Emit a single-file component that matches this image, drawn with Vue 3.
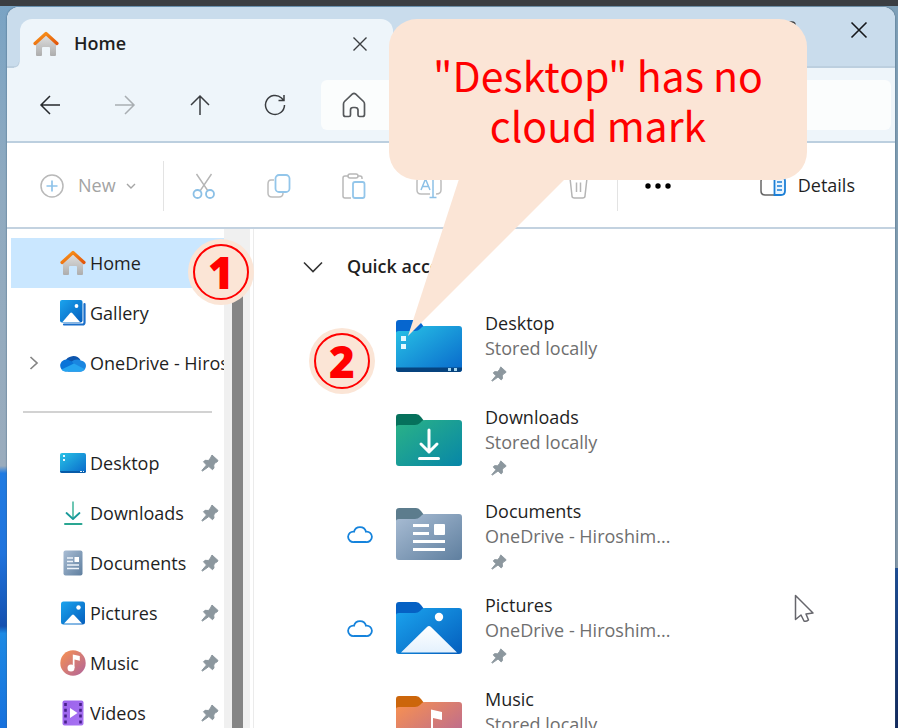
<script setup>
const commands = [
  { id: 'cut', label: 'Cut' },
  { id: 'copy', label: 'Copy' },
  { id: 'paste', label: 'Paste' },
  { id: 'rename', label: 'Rename' },
  { id: 'share', label: 'Share' },
  { id: 'trash', label: 'Delete' },
]

const places = [
  { id: 'home', name: 'Home', active: true },
  { id: 'gallery', name: 'Gallery' },
  { id: 'onedrive', name: 'OneDrive - Hiroshima', expandable: true },
]

const pinned = [
  { id: 'desktop', name: 'Desktop' },
  { id: 'downloads', name: 'Downloads' },
  { id: 'documents', name: 'Documents' },
  { id: 'pictures', name: 'Pictures' },
  { id: 'music', name: 'Music' },
  { id: 'videos', name: 'Videos' },
]

const folders = [
  { id: 'desktop', name: 'Desktop', place: 'Stored locally' },
  { id: 'downloads', name: 'Downloads', place: 'Stored locally' },
  { id: 'documents', name: 'Documents', place: 'OneDrive - Hiroshim...', cloud: true },
  { id: 'pictures', name: 'Pictures', place: 'OneDrive - Hiroshim...', cloud: true },
  { id: 'music', name: 'Music', place: 'Stored locally' },
]
</script>

<template>
  <div class="desk">
    <svg class="sprite" aria-hidden="true">
      <defs>
        <linearGradient id="g-roof" x1="0" y1="0" x2="1" y2="1"><stop offset="0" stop-color="#fb9a1c" /><stop offset="1" stop-color="#e2560b" /></linearGradient>
        <linearGradient id="g-wall" x1="0" y1="0" x2="0" y2="1"><stop offset="0" stop-color="#e2e2e2" /><stop offset="1" stop-color="#adadad" /></linearGradient>
        <linearGradient id="g-desktop" x1="0" y1="0" x2="1" y2="1"><stop offset="0" stop-color="#29c3e6" /><stop offset="1" stop-color="#0868cb" /></linearGradient>
        <linearGradient id="g-downloads" x1="0" y1="0" x2="1" y2="1"><stop offset="0" stop-color="#2bb386" /><stop offset="1" stop-color="#0786a8" /></linearGradient>
        <linearGradient id="g-documents" x1="0" y1="0" x2="1" y2="1"><stop offset="0" stop-color="#a9bdd4" /><stop offset="1" stop-color="#5f7f9f" /></linearGradient>
        <linearGradient id="g-pictures" x1="0" y1="0" x2="1" y2="1"><stop offset="0" stop-color="#1ba4ee" /><stop offset="1" stop-color="#045ebd" /></linearGradient>
        <linearGradient id="g-music" x1="0" y1="0" x2="1" y2="1"><stop offset="0" stop-color="#f9924f" /><stop offset="1" stop-color="#b0649c" /></linearGradient>
        <linearGradient id="g-videos" x1="0" y1="0" x2="1" y2="1"><stop offset="0" stop-color="#9a62ea" /><stop offset="1" stop-color="#a873f3" /></linearGradient>
        <linearGradient id="g-snow" x1="0" y1="0" x2="0" y2="1"><stop offset="0" stop-color="#ffffff" /><stop offset="1" stop-color="#e4f1fd" /></linearGradient>
      </defs>

      <symbol id="s-home" viewBox="0 0 26 26">
        <path d="M3 12 13 3l10 9v12q0 1-1 1h-4q-1 0-1-1v-7q0-1-1-1h-6q-1 0-1 1v7q0 1-1 1H4q-1 0-1-1z" fill="url(#g-wall)" />
        <path d="M2 12.500 13 2.500l11 10" fill="none" stroke="url(#g-roof)" stroke-width="3.200" stroke-linecap="round" stroke-linejoin="round" />
      </symbol>
      <symbol id="s-gallery" viewBox="0 0 26 26">
        <path d="M24.500 4v18.500q0 2-2 2H4" fill="none" stroke="#1a6fca" stroke-width="2.200" stroke-linecap="round" />
        <rect x="0" y="0" width="22.500" height="22.500" rx="2" fill="url(#g-pictures)" />
        <path d="m2.500 22 7.700-9q1-1 2 0l7.800 9z" fill="#fff" />
        <circle cx="16.500" cy="6" r="1.900" fill="#fff" />
      </symbol>
      <symbol id="s-onedrive" viewBox="0 0 26 26">
        <path d="M5 12a8.500 8 0 0 1 15.500-2l-7 9z" fill="#0d55ad" />
        <path d="M11 12q5-4 10-1.500 5 1 5 5.500-.500 5.500-6 5.500H8z" fill="#1a86e0" />
        <path d="M5.500 21.500a6 6 0 1 1 3-11.500q3.500 1 5.500 4l9 6q-1 1.500-3 1.500z" fill="#0a74d8" />
        <path d="M1.500 19.500 14 13.500l10.500 5.500q-1.500 2.500-4.500 2.500H5.500q-3 0-4-2z" fill="#25a4f0" />
      </symbol>
      <symbol id="s-desktop" viewBox="0 0 26 26">
        <rect x="0" y="3" width="26" height="20" rx="2" fill="url(#g-desktop)" />
        <path d="M0 21h26q0 2-2 2H2q-2 0-2-2z" fill="#075ba8" />
        <path d="M3 5h2v2H3zM3 9h2v2H3zM20 21h2v1h-2zM23 21h1v1h-1z" fill="#e9f8ff" />
      </symbol>
      <symbol id="s-downloads" viewBox="0 0 26 26">
        <path d="M12.300 1.500h1.400V19h-1.400z" fill="#2fae92" />
        <path d="m6.500 13 6.500 6 6.500-6" fill="none" stroke="#199a9a" stroke-width="1.800" stroke-linecap="round" stroke-linejoin="round" />
        <path d="M5 24h16.500" stroke="#2aa692" stroke-width="2" stroke-linecap="round" />
      </symbol>
      <symbol id="s-documents" viewBox="0 0 26 26">
        <rect x="3.500" y="0.500" width="19" height="25" rx="2" fill="url(#g-documents)" />
        <path d="M7 8h6M7 11.500h6M7 15h12M7 18.500h12" stroke="#eef4fa" stroke-width="1.400" />
        <rect x="14.500" y="7" width="4.500" height="5" fill="#fff" />
      </symbol>
      <symbol id="s-pictures" viewBox="0 0 26 26">
        <rect x="1" y="1.500" width="24" height="23" rx="2.500" fill="url(#g-pictures)" />
        <path d="m4 23.500 8-8.500q1-1 2 0l8 8.500z" fill="#fff" />
        <circle cx="18.500" cy="7.500" r="2.200" fill="#fff" />
      </symbol>
      <symbol id="s-music" viewBox="0 0 26 26">
        <circle cx="13" cy="13" r="12.700" fill="url(#g-music)" />
        <circle cx="11" cy="18" r="3.500" fill="#fff" />
        <path d="M12.800 18V4.500l7 1.500v4.800l-5.300-1.300V18z" fill="#fff" />
      </symbol>
      <symbol id="s-videos" viewBox="0 0 26 26">
        <rect x="2.500" y="0.500" width="21" height="25" rx="2" fill="url(#g-videos)" />
        <path d="M5.500 3v21M20.500 3v21" stroke="#47208b" stroke-width="2.600" stroke-dasharray="3 2.800" />
        <path d="m10 8 7.500 5-7.500 5z" fill="#fff" />
      </symbol>

      <symbol id="f-desktop" viewBox="0 0 68 54">
        <path d="M1 4q0-3 3-3h17q3 0 5 3l3 4v8H1z" fill="#0666cf" />
        <path d="M1 14q0-2 3-2h16q3 0 5-2l2-2q1-1 3-1h34q3 0 3 3v40q0 3-3 3H4q-3 0-3-3z" fill="url(#g-desktop)" />
        <path d="M1 48.500h66v1.500q0 3-3 3H4q-3 0-3-3z" fill="#06437e" />
        <path d="M6 17h5v5H6zM6 25h5v5H6z" fill="#e3f8ff" /><path d="M53 49h3v3h-3zM59 49h3v3h-3z" fill="#a5d5ef" />
      </symbol>
      <symbol id="f-downloads" viewBox="0 0 68 54">
        <path d="M1 4q0-3 3-3h17q3 0 5 3l3 4v8H1z" fill="#06715c" />
        <path d="M1 14q0-2 3-2h16q3 0 5-2l2-2q1-1 3-1h34q3 0 3 3v40q0 3-3 3H4q-3 0-3-3z" fill="url(#g-downloads)" />
        <path d="M34 17v22m-8-8 8 8 8-8" fill="none" stroke="#fff" stroke-width="3" stroke-linecap="round" stroke-linejoin="round" />
        <path d="M24.500 45.500h19" stroke="#fff" stroke-width="3" stroke-linecap="round" />
      </symbol>
      <symbol id="f-documents" viewBox="0 0 68 54">
        <path d="M1 4q0-3 3-3h17q3 0 5 3l3 4v8H1z" fill="#5c7c8d" />
        <path d="M1 14q0-2 3-2h16q3 0 5-2l2-2q1-1 3-1h34q3 0 3 3v40q0 3-3 3H4q-3 0-3-3z" fill="url(#g-documents)" />
        <path d="M18 18.500h16M18 26.500h16M18 34.500h32M18 42.500h32" stroke="#fff" stroke-width="3.200" />
        <rect x="39" y="17" width="11" height="11" rx="1" fill="#fff" />
      </symbol>
      <symbol id="f-pictures" viewBox="0 0 68 54">
        <path d="M1 4q0-3 3-3h17q3 0 5 3l3 4v8H1z" fill="#0561c4" />
        <path d="M1 14q0-2 3-2h16q3 0 5-2l2-2q1-1 3-1h34q3 0 3 3v40q0 3-3 3H4q-3 0-3-3z" fill="url(#g-pictures)" />
        <path d="m6 51.500 26-25.500q2-2 4 0l26 25.500z" fill="url(#g-snow)" />
        <circle cx="44" cy="16" r="4.200" fill="#fff" />
      </symbol>
      <symbol id="f-music" viewBox="0 0 68 54">
        <path d="M1 4q0-3 3-3h17q3 0 5 3l3 4v8H1z" fill="#cc660b" />
        <path d="M1 14q0-2 3-2h16q3 0 5-2l2-2q1-1 3-1h34q3 0 3 3v40q0 3-3 3H4q-3 0-3-3z" fill="url(#g-music)" />
        <path d="M36 14.500 47 17v8l-9-2v16h-2z" fill="#fff" /><circle cx="32" cy="39" r="5.500" fill="#fff" />
      </symbol>

      <symbol id="i-pin" viewBox="0 0 18 18">
        <path d="M11 1l6 5.500-1 1.500-1.500.500-1.800 2.500.300 3-1.500 1.700-3.600-3.200L1.500 17l-.700-.500L5.500 11 2.500 7.800 4 6.300l3.500.200L9.500 4z" fill="currentColor" stroke="currentColor" stroke-linejoin="round" />
      </symbol>

      <symbol id="c-cut" viewBox="0 0 26 26" fill="none" stroke-width="1.400">
        <path d="M5.500 1 17 18M20.500 1 9 18" stroke="#b5b5b5" />
        <g stroke="#8cc0e6" stroke-width="1.800"><circle cx="6.500" cy="21" r="4" /><circle cx="19" cy="21" r="4" /></g>
      </symbol>
      <symbol id="c-copy" viewBox="0 0 26 26" fill="none" stroke-width="1.500">
        <path d="M8 7H5Q2 7 2 11v9q0 4 4 4h7q4 0 4-4" stroke="#bdbdbd" />
        <rect x="9.500" y="2" width="14" height="17" rx="3.500" stroke="#93c6ea" stroke-width="1.800" />
      </symbol>
      <symbol id="c-paste" viewBox="0 0 26 26" fill="none" stroke-width="1.500">
        <path d="M7 3H4Q2 3 2 5v18q0 2 2 2h6M17 3h2q2 0 2 2v1" stroke="#b8b8b8" />
        <rect x="7" y="1" width="10" height="4" rx="2" stroke="#b8b8b8" />
        <rect x="12" y="9" width="11.500" height="16" rx="2" stroke="#93c6ea" stroke-width="1.800" />
      </symbol>
      <symbol id="c-rename" viewBox="0 0 26 26" fill="none" stroke-width="1.500">
        <path d="M14 4H5Q1 4 1 8v9q0 4 4 4h9M20 4q5 0 5 4v9q0 4-5 4" stroke="#bdbdbd" />
        <path d="m5 17 4.500-11L14 17M6.500 13.500h6M17 1v23M13.500 24.500h7M13.500 1h7" stroke="#8cc0e6" />
      </symbol>
      <symbol id="c-share" viewBox="0 0 26 26" fill="none" stroke-width="1.500">
        <path d="M10 5H6Q3 5 3 8v13q0 3 3 3h13q3 0 3-3v-4" stroke="#bdbdbd" /><path d="m16 2 8 6-8 6v-4q-5 0-8 5 1-9 8-9z" stroke="#93c6ea" />
      </symbol>
      <symbol id="c-trash" viewBox="0 0 26 26" fill="none" stroke="#b5b5b5" stroke-width="1.500">
        <path d="M3 5h20M4 5l2 18q0 2 2.500 2h8q2.500 0 2.500-2l2-18M10 5q0-4 3-4t3 4M10.500 9.500V19M14.500 9.500V19" />
      </symbol>
    </svg>

    <div class="strip"></div>
    <main class="window">
      <header class="titlebar">
        <div class="tab">
          <svg class="icon"><use href="#s-home" /></svg>
          <span class="tab-name">Home</span>
          <button class="tab-close" aria-label="Close tab">
            <svg width="16" height="16" viewBox="0 0 16 16"><path d="m1.500 1.500 13 13m0-13-13 13" fill="none" stroke="#3a3d40" stroke-width="1.400" /></svg>
          </button>
        </div>
        <div class="caption">
          <button aria-label="Minimize"><svg width="18" height="18"><path d="M1 9h16" stroke="#222" /></svg></button>
          <button aria-label="Maximize"><svg width="18" height="18"><rect x="1" y="1" width="16" height="16" rx="3" fill="none" stroke="#444" stroke-width="1.500" /></svg></button>
          <button aria-label="Close"><svg width="18" height="18" viewBox="0 0 18 18"><path d="m1.500 1.500 15 15m0-15-15 15" stroke="#16181b" stroke-width="1.600" /></svg></button>
        </div>
      </header>

      <nav class="navbar" aria-label="Navigation">
        <button aria-label="Back"><svg width="22" height="22" viewBox="0 0 22 22"><path d="M21 11H2m9-9-9 9 9 9" fill="none" stroke="#26292c" stroke-width="1.500" /></svg></button>
        <button aria-label="Forward" disabled><svg width="22" height="22" viewBox="0 0 22 22"><path d="M1 11h19m-9-9 9 9-9 9" fill="none" stroke="#a9aeb2" stroke-width="1.500" /></svg></button>
        <button aria-label="Up"><svg width="22" height="22" viewBox="0 0 22 22"><path d="M11 21V2m-9 9 9-9 9 9" fill="none" stroke="#3a3d40" stroke-width="1.500" /></svg></button>
        <button aria-label="Refresh"><svg width="22" height="22" viewBox="0 0 22 22"><path d="M20.500 11a9.500 9.500 0 1 1-3-7l2 2.200M20 1v5.500h-5.500" fill="none" stroke="#3a3d40" stroke-width="1.500" /></svg></button>
        <div class="address">
          <button aria-label="Home"><svg width="24" height="26" viewBox="0 0 24 26"><path d="M1.500 12q0-1.500 1-2.500L10.500 2q1.500-1.300 3 0l8 7.500q1 1 1 2.500v10.500q0 2-2 2h-3q-1.500 0-1.500-1.500v-5q0-2.500-3-2.500h-2Q8.500 15.500 8.500 18v5q0 1.500-1.500 1.500H3.500q-2 0-2-2z" fill="none" stroke="#55585b" stroke-width="1.700" /></svg></button>
        </div>
      </nav>

      <div class="toolbar" role="toolbar" aria-label="Commands">
        <button class="new" disabled>
          <svg width="24" height="24" viewBox="0 0 24 24" fill="none"><circle cx="12" cy="12" r="11" stroke="#b9b9b9" stroke-width="1.500" /><path d="M12 6.500v11M6.500 12h11" stroke="#8fc3ea" stroke-width="1.700" /></svg>
          <span>New</span>
          <svg width="10" height="6" viewBox="0 0 10 6"><path d="m1 1 4 4 4-4" fill="none" stroke="#a5a5a5" stroke-width="1.400" /></svg>
        </button>
        <span class="rule"></span>
        <button v-for="c in commands" :key="c.id" class="command" :aria-label="c.label" disabled>
          <svg class="icon"><use :href="'#c-' + c.id" /></svg>
        </button>
        <span class="rule"></span>
        <button class="command" aria-label="See more">
          <svg width="26" height="6"><circle cx="3" cy="3" r="2.700" /><circle cx="13" cy="3" r="2.700" /><circle cx="23" cy="3" r="2.700" /></svg>
        </button>
        <button class="details">
          <svg width="26" height="20" viewBox="0 0 26 20" fill="none"><path d="M14 1H5Q1 1 1 5v10q0 4 4 4h9" stroke="#666" stroke-width="1.500" /><path d="M14.500 1H21q4 0 4 4v10q0 4-4 4h-6.500z" fill="#eaf5ff" stroke="#1c7fd6" stroke-width="1.800" /><path d="M17 6h5M17 10h5M17 14h5" stroke="#1c7fd6" stroke-width="1.600" /></svg>
          <span>Details</span>
        </button>
      </div>

      <div class="body">
        <aside class="sidebar">
          <ul class="tree">
            <li v-for="p in places" :key="p.id">
              <a href="#" :class="{ active: p.active }">
                <span class="expander"><svg v-if="p.expandable" width="10" height="14" viewBox="0 0 10 14"><path d="m1.500 1 6.500 6-6.500 6" fill="none" stroke="#858585" stroke-width="1.700" /></svg></span>
                <svg class="icon"><use :href="'#s-' + p.id" /></svg>
                <span class="name">{{ p.name }}</span>
              </a>
            </li>
            <li class="separator" role="separator"></li>
            <li v-for="p in pinned" :key="p.id">
              <a href="#">
                <span class="expander"></span>
                <svg class="icon"><use :href="'#s-' + p.id" /></svg>
                <span class="name">{{ p.name }}</span>
                <svg class="pin"><use href="#i-pin" /></svg>
              </a>
            </li>
          </ul>
          <div class="track"><div class="thumb"></div></div>
        </aside>

        <section class="content">
          <h2>
            <svg width="20" height="12" viewBox="0 0 20 12"><path d="m1 1.500 9 9 9-9" fill="none" stroke="#333" stroke-width="1.600" /></svg>
            Quick access
          </h2>
          <ul class="folders">
            <li v-for="f in folders" :key="f.id">
              <span class="status">
                <svg v-if="f.cloud" width="26" height="18" viewBox="0 0 26 18"><path d="M7 17a5.200 5.200 0 1 1 0-10.300 6.200 6.200 0 0 1 12 0A5.200 5.200 0 1 1 19 17z" fill="#fff" stroke="#1583dc" stroke-width="1.800" /></svg>
              </span>
              <svg class="folder"><use :href="'#f-' + f.id" /></svg>
              <div class="info">
                <span>{{ f.name }}</span>
                <span class="place">{{ f.place }}</span>
                <svg class="pin"><use href="#i-pin" /></svg>
              </div>
            </li>
          </ul>
        </section>
      </div>
    </main>

    <svg class="cursor" width="20" height="30" viewBox="0 0 20 30"><path d="M1.500 1.500v24l5.500-4.500 3 6q2 1 4.500-1L12 20l7-1z" fill="#fff" stroke="#66666c" stroke-width="1.500" stroke-linejoin="round" /></svg>
    <div class="callout">
      <p>"Desktop" has no cloud mark</p>
      <svg width="160" height="158" viewBox="0 0 160 158"><path d="M51 0h106L0 157z" fill="#fbe5d6" /></svg>
    </div>
    <div class="badge first"><span>1</span></div>
    <div class="badge second"><span>2</span></div>
  </div>
</template>

<style>
body { margin: 0; background: #1c5fc4; }
</style>

<style scoped>
* { box-sizing: border-box; }
.desk {
  position: relative;
  display: flex;
  flex-direction: column;
  height: 100vh;
  overflow: hidden;
  font-family: "Open Sans", "Noto Sans", sans-serif;
  font-size: 18px;
  line-height: 25px;
  color: #1f1f1f;
  background:
    linear-gradient(#7fa0b8, #8598a8 78%, #1c4c96 78%, #12285c) right / 50% 100% no-repeat,
    linear-gradient(#79a3c4, #8faac0 25%, #9aacbd 64%, #1f7be2 65%, #1f73dd 76%, #1450b0 86%, #1d8ae4 87%, #1670dd) left / 50% 100% no-repeat;
}
.sprite { position: absolute; width: 0; height: 0; }
.strip { flex: none; height: 6px; background: #3b3e42; }
button { display: flex; align-items: center; justify-content: center; padding: 0; border: 0; background: none; font: inherit; color: inherit; }
ul { margin: 0; padding: 0; list-style: none; }
svg { flex: none; display: block; }
.icon { width: 26px; height: 26px; }
.pin { width: 18px; height: 18px; color: #8c979e; }

.window {
  flex: 1;
  min-height: 0;
  display: flex;
  flex-direction: column;
  margin: 1px 3px 0 7px;
  border-radius: 12px 12px 0 0;
  background: #fff;
  box-shadow: 0 0 2px #3c5d78;
  overflow: hidden;
}
.titlebar { flex: none; display: flex; height: 61px; padding-left: 13px; background: #c9dcec; border-bottom: 2px solid #bccfdf; }
.tab {
  position: relative;
  display: flex;
  align-items: center;
  width: 43%;
  max-width: 373px;
  margin: 12px 0 -2px;
  padding: 0 23px 0 13px;
  border-radius: 12px 12px 0 0;
  background: #eef5fa;
}
.tab::before { content: ""; position: absolute; left: -6px; bottom: 0; width: 6px; height: 6px; background: radial-gradient(circle at 0 0, transparent 4px, #bccfdf 5px, #eef5fa 6px); }
.tab-name { margin-left: 15px; font-weight: 600; }
.tab-close { width: 20px; height: 20px; margin-left: auto; }
.caption { display: flex; margin-left: auto; height: 46px; }
.caption button { width: 72px; }

.navbar { flex: none; display: flex; align-items: center; height: 75px; padding: 0 4px 0 5px; background: #eef5fa; border-bottom: 2px solid #bccfdf; }
.navbar > button { width: 75px; height: 50px; }
.address { flex: 1; display: flex; align-items: center; height: 50px; margin-left: 9px; border-radius: 6px; background: #fbfdfd; }
.address button { width: 66px; height: 50px; }

.toolbar { flex: none; display: flex; align-items: center; height: 86px; padding: 1px 40px 0 33px; border-bottom: 2px solid #c3d2e0; }
.new { gap: 14px; height: 50px; padding-right: 27px; color: #a3a3a3; }
.new svg:last-child { margin-left: -4px; }
.rule { width: 1px; height: 50px; background: #e3e3e3; }
.rule + .command { margin-left: 3px; }
.command { width: 75px; height: 50px; }
.details { gap: 12px; height: 50px; margin-left: auto; }

.body { flex: 1; min-height: 0; display: flex; }
.sidebar { flex: none; display: flex; width: 247px; border-right: 1px solid #ebebeb; }
.tree { flex: 1; min-width: 0; padding: 9px 0 0 4px; overflow: hidden; }
.tree a { display: flex; align-items: center; height: 50px; color: inherit; text-decoration: none; white-space: nowrap; }
.tree .active { background: #cae7ff; }
.expander { flex: none; display: flex; justify-content: center; width: 49px; padding-right: 3px; }
.name { flex: 1; min-width: 0; margin-left: 4px; overflow: hidden; }
.tree .pin { margin-right: 5px; }
.separator { height: 50px; padding: 23px 12px 0; }
.separator::before { content: ""; display: block; height: 2px; background: #d2d2d2; }
.track { width: 26px; margin-right: 3px; padding: 60px 7px 0 8px; background: #f0f0f0; }
.thumb { height: 100%; background: #858585; }

.content { flex: 1; min-width: 0; padding: 25px 20px 0 49px; }
h2 { display: flex; align-items: center; gap: 24px; margin: 0; font-size: 18px; line-height: 25px; font-weight: 600; }
.folders { display: grid; gap: 19px; margin: 32px 0 0 44px; }
.folders li { display: grid; grid-template-columns: 26px 68px 1fr; column-gap: 22px; height: 75px; }
.status { padding-top: 26px; }
.folder { width: 68px; height: 54px; margin-top: 8px; }
.info { display: flex; flex-direction: column; white-space: nowrap; }
.place { color: #6f6f6f; }
.info .pin { width: 16px; height: 16px; margin: 5px 0 0 6px; }

.cursor { position: absolute; left: 794px; top: 594px; }
.callout { position: absolute; left: 389px; top: 19px; width: 418px; padding: 30px 32px 31px; border-radius: 28px; background: #fbe5d6; }
.callout p { margin: 0; text-align: center; font: 41px/50px "Noto Sans CJK JP", sans-serif; color: #f00; }
.callout svg { position: absolute; left: 19px; top: 160px; }
.badge { position: absolute; width: 66px; height: 66px; padding: 5px; border-radius: 50%; background: #fbe5d6; }
.badge span { display: flex; align-items: center; justify-content: center; height: 100%; border: 2px solid #f00; border-radius: 50%; font: 900 44px/52px "Noto Sans", "Open Sans", sans-serif; color: #f00; }
.first { left: 188px; top: 239px; }
.second { left: 309px; top: 328px; }
</style>
